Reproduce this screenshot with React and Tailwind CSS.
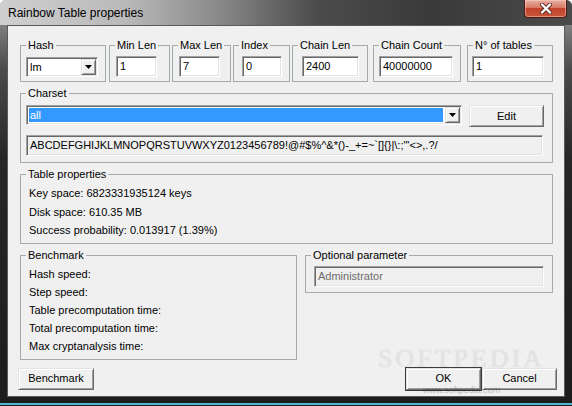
import React from "react";

const sunken =
  "border border-t-[#a0a0a0] border-l-[#a0a0a0] border-b-white border-r-white shadow-[inset_1px_1px_0_#696969,inset_-1px_-1px_0_#e3e3e3]";
const raised =
  "border border-t-[#e3e3e3] border-l-[#e3e3e3] border-b-[#696969] border-r-[#696969] shadow-[inset_1px_1px_0_#ffffff,inset_-1px_-1px_0_#a0a0a0]";

const CHARS = "ABCDEFGHIJKLMNOPQRSTUVWXYZ0123456789!@#$%^&*()-_+=~`[]{}|\\:;\"'<>,.?/";

const topFields = [
  { label: "Min Len", value: "1", box: "ml-[3px] w-[61px]", input: "ml-[6px] w-[41px]" },
  { label: "Max Len", value: "7", box: "ml-[2px] w-[59px]", input: "ml-[6px] w-[41px]" },
  { label: "Index", value: "0", box: "ml-[2px] w-[57px]", input: "ml-[8px] w-[40px]" },
  { label: "Chain Len", value: "2400", box: "ml-[2px] w-[76px]", input: "ml-[9px] w-[57px]" },
  { label: "Chain Count", value: "40000000", box: "ml-[5px] w-[88px]", input: "ml-[5px] w-[74px]" },
  { label: "N° of tables", value: "1", box: "ml-[6px] w-[86px]", input: "ml-[4px] w-[72px]" },
];

const tableProps = [
  "Key space: 6823331935124 keys",
  "Disk space: 610.35 MB",
  "Success probability: 0.013917 (1.39%)",
];

const benchRows = [
  "Hash speed:",
  "Step speed:",
  "Table precomputation time:",
  "Total precomputation time:",
  "Max cryptanalysis time:",
];

function Group({ label, className = "", children }) {
  return (
    <fieldset className={`min-w-0 border border-[#a3abab] ${className}`}>
      <legend className="ml-[5px] px-[2px] leading-[13px]">{label}</legend>
      {children}
    </fieldset>
  );
}

function Arrow() {
  return (
    <svg width="7" height="4" viewBox="0 0 7 4">
      <path d="M0 0 H7 L3.5 4 Z" fill="#000" />
    </svg>
  );
}

function Combo({ value, className = "", selected = false }) {
  return (
    <div className={`flex h-[20px] items-stretch bg-white ${sunken} ${className}`}>
      <div className="flex min-w-0 flex-1 items-stretch p-[2px]">
        <span
          className={`flex flex-1 items-center pl-[1px] leading-none ${
            selected ? "bg-[#3399ff] text-white" : ""
          }`}
        >
          {value}
        </span>
      </div>
      <div className={`my-[1px] mr-[1px] flex w-[15px] items-center justify-center bg-[#f0f0f0] ${raised}`}>
        <Arrow />
      </div>
    </div>
  );
}

function Field({ value, className = "", disabled = false, readOnly = false }) {
  const bg = disabled || readOnly ? "bg-[#f0f0f0]" : "bg-white";
  const color = disabled ? "text-[#6d6d6d]" : "text-black";
  return (
    <div className={`flex h-[21px] items-center overflow-hidden whitespace-nowrap pl-[3px] ${bg} ${color} ${sunken} ${className}`}>
      {value}
    </div>
  );
}

function Button({ children, className = "", isDefault = false }) {
  return (
    <button
      type="button"
      className={`flex h-[22px] items-center justify-center bg-[#f0f0f0] ${
        isDefault ? "outline outline-1 outline-[#3c3c3c]" : ""
      } ${raised} ${className}`}
    >
      {children}
    </button>
  );
}

function CloseButton() {
  return (
    <div className="mr-[5px] flex h-[18px] w-[43px] items-center justify-center rounded-b-[4px] border border-t-0 border-[#4a1c12] bg-[linear-gradient(to_bottom,#e9b1a3_0%,#d97a64_45%,#c2422a_50%,#c9563a_100%)] shadow-[inset_0_0_0_1px_rgba(255,210,200,0.5)]">
      <svg width="14" height="11" viewBox="0 0 14 11">
        <path d="M3 1.5 L11 9.5 M11 1.5 L3 9.5" stroke="#5a2a20" strokeWidth="4" strokeLinecap="round" />
        <path d="M3 1.5 L11 9.5 M11 1.5 L3 9.5" stroke="#ffffff" strokeWidth="2.4" strokeLinecap="round" />
      </svg>
    </div>
  );
}

export default function App() {
  return (
    <div className="relative flex h-[406px] w-[572px] flex-col overflow-hidden rounded-t-[6px] bg-[linear-gradient(to_bottom,#9c9c9c_0px,#4a4a4a_70px,#262626_160px,#1c1c1c_100%)] font-['Liberation_Sans',Arial,sans-serif] text-[11px] text-black">
      {/* title bar */}
      <div className="flex h-[25px] items-start bg-[linear-gradient(to_right,#cfcfcf_0%,#b9b9b9_22%,#8a8a8a_38%,#4c4c4c_55%,#3a3a3a_75%,#4a4a4a_100%)]">
        <span className="mt-[6px] pl-[8px] text-[12px] leading-[15px]">Rainbow Table properties</span>
        <div className="ml-auto">
          <CloseButton />
        </div>
      </div>

      {/* client area */}
      <div className="ml-[7px] mr-[7px] h-[372px] overflow-hidden border border-[#5a5a5a] bg-[#f0f0f0] pl-[12px] pr-[10px] pt-[13px]">
        <div className="flex items-start">
          <Group label="Hash" className="w-[86px]">
            <Combo value="lm" className="ml-[5px] mb-[4px] mt-[5px] w-[72px]" />
          </Group>
          {topFields.map((f) => (
            <Group key={f.label} label={f.label} className={f.box}>
              <Field value={f.value} className={`mb-[4px] mt-[4px] ${f.input}`} />
            </Group>
          ))}
        </div>

        <Group label="Charset" className="mt-[5px] w-[533px]">
          <div className="mt-[5px] flex items-start">
            <Combo value="all" selected className="ml-[5px] w-[436px]" />
            <Button className="ml-[7px] h-[20px] w-[75px]">Edit</Button>
          </div>
          <Field value={CHARS} readOnly className="mb-[6px] ml-[5px] mt-[8px] w-[517px]" />
        </Group>

        <Group label="Table properties" className="mt-[5px] w-[533px]">
          <div className="pb-[3px] pl-[8px] pt-[3px]">
            {tableProps.map((t) => (
              <div key={t} className="leading-[18.5px]">
                {t}
              </div>
            ))}
          </div>
        </Group>

        <div className="mt-[5px] flex items-start">
          <Group label="Benchmark" className="w-[277px]">
            <div className="pb-[4px] pl-[8px] pt-[3px]">
              {benchRows.map((t) => (
                <div key={t} className="leading-[18px]">
                  {t}
                </div>
              ))}
            </div>
          </Group>
          <Group label="Optional parameter" className="ml-[8px] w-[248px]">
            <Field value="Administrator" disabled className="mb-[5px] ml-[8px] mt-[4px] w-[230px]" />
          </Group>
        </div>

        <div className="mt-[8px] flex -ml-[2px]">
          <Button className="w-[76px]">Benchmark</Button>
          <Button isDefault className="ml-auto w-[75px]">
            OK
          </Button>
          <Button className="ml-[1px] mr-[-3px] w-[75px]">Cancel</Button>
        </div>
      </div>

      {/* bottom frame */}
      <div className="h-[6px]" />
      <div className="h-[2px] bg-[#4cb7c9]" />

      {/* watermark */}
      <div className="pointer-events-none absolute left-[378px] top-[345px] flex flex-col items-center text-white/50 [text-shadow:0_0_1px_rgba(0,0,0,0.18)]">
        <span className="font-['Liberation_Serif',serif] text-[26px] leading-[28px] tracking-[3px]">SOFTPEDIA</span>
        <span className="mt-[12px] text-[9px] leading-[10px] text-black/10">www.softpedia.com</span>
      </div>
    </div>
  );
}
